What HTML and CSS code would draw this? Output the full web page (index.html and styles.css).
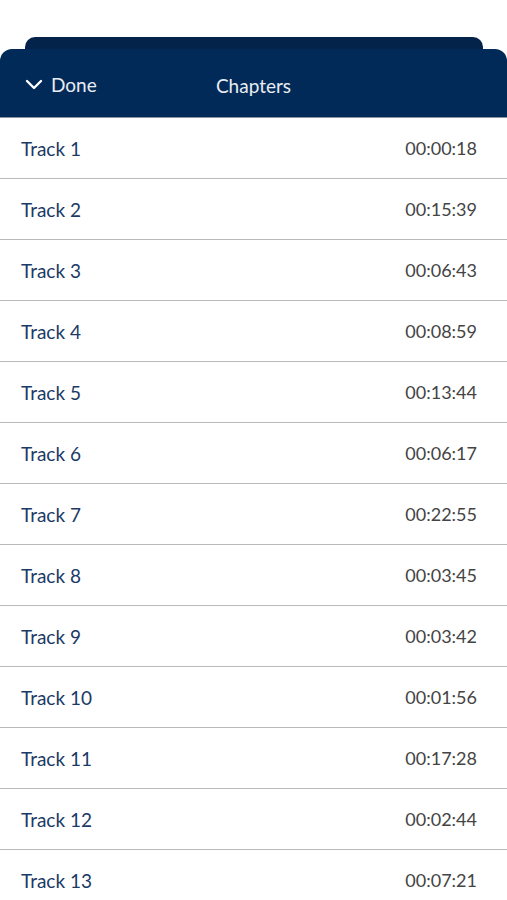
FILE: index.html
```html
<!DOCTYPE html>
<html lang="en">
<head>
    <meta charset="UTF-8">
    <meta name="viewport" content="width=device-width, initial-scale=1.0">
    <title>Chapters</title>
    <link rel="stylesheet" href="styles.css">
</head>
<body>
    <div class="sheet">
        <div class="tab_back"></div>
        <header class="bar">
            <div class="done">
                <svg class="chevron" width="18" height="11" viewBox="0 0 18 11">
                    <path d="M2 2 L9 9 L16 2" fill="none" stroke="#ffffff" stroke-width="2.4" stroke-linecap="round" stroke-linejoin="round"/>
                </svg>
                <span>Done</span>
            </div>
            <h1 class="title">Chapters</h1>
        </header>

        <ul class="tracks">
            <li><span class="name">Track 1</span><span class="time">00:00:18</span></li>
            <li><span class="name">Track 2</span><span class="time">00:15:39</span></li>
            <li><span class="name">Track 3</span><span class="time">00:06:43</span></li>
            <li><span class="name">Track 4</span><span class="time">00:08:59</span></li>
            <li><span class="name">Track 5</span><span class="time">00:13:44</span></li>
            <li><span class="name">Track 6</span><span class="time">00:06:17</span></li>
            <li><span class="name">Track 7</span><span class="time">00:22:55</span></li>
            <li><span class="name">Track 8</span><span class="time">00:03:45</span></li>
            <li><span class="name">Track 9</span><span class="time">00:03:42</span></li>
            <li><span class="name">Track 10</span><span class="time">00:01:56</span></li>
            <li><span class="name">Track 11</span><span class="time">00:17:28</span></li>
            <li><span class="name">Track 12</span><span class="time">00:02:44</span></li>
            <li><span class="name">Track 13</span><span class="time">00:07:21</span></li>
        </ul>
    </div>
</body>
</html>
```

FILE: styles.css
```css
body {
    margin: 0;
    background-color: #ffffff;
    font-family: Lato, "Open Sans", sans-serif;
    overflow: hidden;
}

.sheet {
    padding-top: 37px;
}

.tab_back {
    height: 14px;
    margin: 0 24px 0 25px;
    background-color: #04234a;
    border-radius: 10px 10px 0 0;
}

.bar {
    position: relative;
    display: flex;
    align-items: center;
    height: 66px;
    padding-top: 2px;
    margin-top: -2px;
    background-color: #022a58;
    border-radius: 12px 12px 0 0;
    border-bottom: 1px solid #8d939b;
}

.done {
    display: flex;
    align-items: center;
    gap: 8px;
    padding-left: 25px;
    color: #e9edf3;
    font-size: 19px;
}

.chevron {
    display: block;
}

.title {
    position: absolute;
    left: 0;
    right: 0;
    margin: 0;
    padding-top: 2px;
    text-align: center;
    font-size: 19px;
    font-weight: normal;
    color: #e9edf3;
    pointer-events: none;
}

.tracks {
    list-style: none;
    margin: 0;
    padding: 0;
}

.tracks li {
    display: flex;
    justify-content: space-between;
    align-items: center;
    height: 60px;
    padding: 0 30px 0 21px;
    border-bottom: 1px solid #bababa;
}

.name {
    font-size: 19px;
    color: #1b3a66;
}

.time {
    font-size: 18px;
    color: #444444;
}
```
